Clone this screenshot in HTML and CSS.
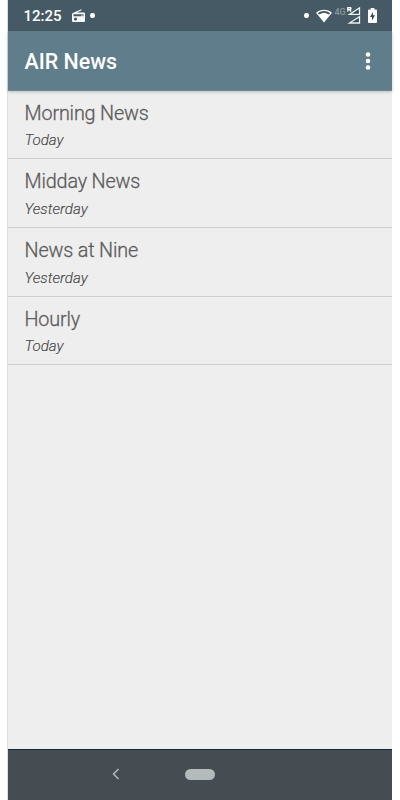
FILE: index.html
```html
<!DOCTYPE html>
<html lang="en">
<head>
<meta charset="utf-8">
<title>AIR News</title>
<link rel="stylesheet" href="styles.css">
</head>
<body>
<div class="phone">
  <div class="status">
    <span class="time">12:25</span>
    <svg class="radio" width="13" height="14" viewBox="0 0 13 14"><path d="M.8 4 9.2.2l.5 1.1L4.8 3.5H12a1 1 0 0 1 1 1V12a1 1 0 0 1-1 1H1a1 1 0 0 1-1-1V5Z" fill="#f5f7f8"/><path d="M1.5 5.2h10v2.1h-1V6.1h-1v1.2h-8Z" fill="#455a64"/><circle cx="3.5" cy="10" r="1.6" fill="#455a64"/></svg>
    <span class="dot"></span>
    <span class="spacer"></span>
    <span class="dot"></span>
    <svg class="wifi" width="16" height="14" viewBox="0 0 16 14"><path d="M0 3.7C4.4-.3 11.6-.3 16 3.7L8 13.5Z" fill="#fff"/><path d="M1.8 4.2C5.5 1.3 10.5 1.3 14.2 4.2L13 5.6C9.8 3.3 6.2 3.3 3 5.6Z" fill="#455a64"/></svg>
    <span class="net">4G</span>
    <svg class="signal" width="14" height="17" viewBox="0 0 14 17"><path d="M2.5 7.4h10V.9ZM2.5 16h10V9.7Z" fill="#344c58" stroke="#edf0ef" stroke-width="1.3"/><path d="M.8 4.5v-4H3a1 1 0 0 1 0 2H1m1.5 0 1.6 2" fill="none" stroke="#fff" stroke-width="1.3"/></svg>
    <svg class="battery" width="9" height="15" viewBox="0 0 9 15"><path d="M2.7 0h3.6v1.5H8a1 1 0 0 1 1 1V14a1 1 0 0 1-1 1H1a1 1 0 0 1-1-1V2.5a1 1 0 0 1 1-1h1.7Z" fill="#fff"/><path d="M5 4 2 9h2v3.5L7 7.3H5Z" fill="#344955"/></svg>
  </div>
  <header class="bar">
    <h1>AIR News</h1>
    <svg width="6" height="18" viewBox="0 0 6 18" fill="#fff"><circle cx="3" cy="2.5" r="2.3"/><circle cx="3" cy="9" r="2.3"/><circle cx="3" cy="15.5" r="2.3"/></svg>
  </header>
  <main class="list">
    <div class="row"><div class="title">Morning News</div><div class="sub">Today</div></div>
    <div class="row"><div class="title">Midday News</div><div class="sub">Yesterday</div></div>
    <div class="row"><div class="title">News at Nine</div><div class="sub">Yesterday</div></div>
    <div class="row"><div class="title">Hourly</div><div class="sub">Today</div></div>
  </main>
  <nav class="nav">
    <svg width="8" height="12" viewBox="0 0 8 12"><path d="M6.5 1 1.5 6l5 5" fill="none" stroke="#b5babc" stroke-width="1.5"/></svg>
    <span class="home"></span>
  </nav>
</div>
</body>
</html>
```
FILE: styles.css
```css
* { box-sizing: border-box; }
body { margin: 0; background: #fff; font-family: Roboto, "Liberation Sans", sans-serif; }
.phone { width: 384px; height: 800px; margin-left: 8px; display: flex; flex-direction: column; background: #eee; box-shadow: -.5px 0 0 #bbb; }
.status { height: 31px; flex: none; background: #455a64; display: flex; align-items: center; padding: 0 15.5px; color: #fff; }
.time { font-size: 15px; font-weight: 500; line-height: 18px; margin-top: 1px; width: 48.5px; }
.dot { width: 4.5px; height: 4.5px; border-radius: 50%; background: #fff; margin-left: 5px; }
.spacer { flex: 1; }
.wifi { margin-left: 7px; }
.net { font-size: 9px; font-weight: 500; line-height: 10px; color: #8b989e; margin: -8px 0 0 3px; width: 12px; white-space: nowrap; }
.signal { margin-right: 7px; }
.bar { height: 59.5px; flex: none; background: #607d8b; display: flex; align-items: center; justify-content: space-between; padding: 1px 21px 0 16.5px; border-bottom: 1px solid #6f8793; box-shadow: 0 1px 3px rgba(0,0,0,.22); }
h1 { margin: 2px 0 0; color: #fff; font-size: 21.4px; font-weight: 500; line-height: 28px; }
.list { flex: 1; }
.row { height: 68.7px; padding: 9px 16.5px 0; border-bottom: 1px solid #cecece; }
.title { color: #5c5c5c; font-size: 19.8px; font-weight: 300; letter-spacing: -.16px; line-height: 28px; -webkit-text-stroke: .3px #5c5c5c; }
.sub { color: #484848; font-size: 15.1px; font-weight: 300; font-style: italic; line-height: 20px; margin-top: 2.9px; -webkit-text-stroke: .15px #484848; }
.nav { height: 51px; flex: none; border-top: 1px solid #122c36; background: #454d52; display: flex; align-items: center; padding: 0 0 2px 104px; }
.home { width: 30px; height: 11px; border-radius: 6px; background: #b5babc; margin-left: 65px; }
```
